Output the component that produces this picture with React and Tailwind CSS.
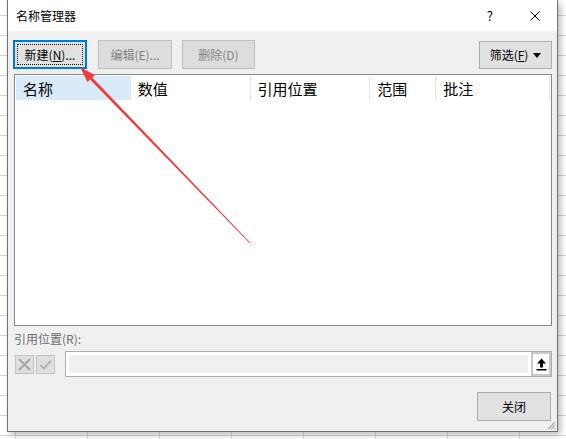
import React from "react";

const COLS = [
  { label: "名称", w: "w-[114px]", selected: true },
  { label: "数值", w: "w-[120px]" },
  { label: "引用位置", w: "w-[120px]" },
  { label: "范围", w: "w-[66px]" },
  { label: "批注", w: "w-[114px]" },
];

export default function App() {
  return (
    <div className="relative w-[566px] h-[439px] overflow-hidden bg-white bg-[linear-gradient(to_right,#d6d6d6_1px,transparent_1px),linear-gradient(to_bottom,#d6d6d6_1px,transparent_1px)] bg-[size:72px_20px] bg-[position:15px_15px] font-['Noto_Sans_CJK_SC',sans-serif] text-black">
      {/* Dialog */}
      <div className="absolute left-[7px] top-0 w-[551px] h-[432px] flex flex-col border-x border-b border-[#707070] bg-[#f0f0f0] shadow-[3px_3px_6px_rgba(0,0,0,0.25)]">
        {/* Title bar */}
        <div className="h-[31px] shrink-0 bg-white flex items-center pl-[8px] pr-[17px]">
          <span className="flex-1 text-[12px] leading-none">名称管理器</span>
          <span className="text-[13px] leading-none">?</span>
          <svg width="10" height="10" viewBox="0 0 10 10" className="ml-[37px]">
            <path d="M0.5 0.5L9.5 9.5M9.5 0.5L0.5 9.5" stroke="#000" strokeWidth="1" />
          </svg>
        </div>

        {/* Body */}
        <div className="flex-1 flex flex-col pl-[6px] pr-[5px]">
          {/* Button row */}
          <div className="mt-[9px] flex items-start">
            <button className="-ml-[1px] w-[74px] h-[29px] border-2 border-[#0078d7] bg-[#e1e1e1] p-[2px]">
              <div className="h-full border border-dotted border-black flex items-center justify-center text-[12px] leading-none">
                新建(<span className="underline">N</span>)...
              </div>
            </button>
            <button className="ml-[11px] w-[74px] h-[29px] border border-[#bfbfbf] bg-[#dddddd] text-[12px] leading-none text-[#838383] flex items-center justify-center">
              编辑(E)...
            </button>
            <button className="ml-[10px] w-[73px] h-[29px] border border-[#bfbfbf] bg-[#dddddd] text-[12px] leading-none text-[#838383] flex items-center justify-center">
              删除(D)
            </button>
            <button className="ml-auto mt-[1px] w-[73px] h-[28px] border border-[#adadad] bg-[#e1e1e1] text-[12px] leading-none flex items-center justify-center gap-[5px]">
              <span>筛选(<span className="underline">F</span>)</span>
              <svg width="8" height="5" viewBox="0 0 8 5">
                <path d="M0 0H8L4 5Z" fill="#000" />
              </svg>
            </button>
          </div>

          {/* List */}
          <div className="mt-[5px] h-[252px] border border-[#828790] bg-white p-[1px]">
            <div className="flex h-[24px]">
              {COLS.map((c, i) => (
                <div
                  key={c.label}
                  className={`${c.w} h-full flex items-center pl-[7px] text-[15px] leading-none ${
                    c.selected ? "bg-[#d9ebf9]" : "border-l border-[#e5e5e5]"
                  }`}
                >
                  {c.label}
                </div>
              ))}
              <div className="flex-1 border-l border-[#e5e5e5]" />
            </div>
          </div>

          {/* Refers to */}
          <div className="mt-[5px] h-[16px] flex items-center text-[12px] leading-none text-[#6d6d6d]">
            引用位置(R):
          </div>
          <div className="mt-[4px] h-[26px] flex items-center">
            <div className="ml-[1px] w-[19px] h-[19px] border border-[#c2c2c2] bg-[#dfdfdf] flex items-center justify-center">
              <svg width="13" height="13" viewBox="0 0 13 13">
                <path d="M1 1L12 12M12 1L1 12" stroke="#a6a6a6" strokeWidth="2" />
              </svg>
            </div>
            <div className="ml-[2px] w-[19px] h-[19px] border border-[#c2c2c2] bg-[#dfdfdf] flex items-center justify-center">
              <svg width="13" height="13" viewBox="0 0 13 13">
                <path d="M1.5 7L5 10.5L12 2.5" stroke="#b3b3b3" strokeWidth="2" fill="none" />
              </svg>
            </div>
            <div className="ml-[10px] flex-1 h-full flex border border-[#adadad] bg-white">
              <div className="flex-1 p-[3px]">
                <div className="h-full bg-[#f0f0f0]" />
              </div>
              <div className="w-[20px] bg-[#c9c9c9] p-[2px] flex">
                <div className="flex-1 bg-white flex items-center justify-center">
                  <svg width="11" height="13" viewBox="0 0 11 13">
                    <path d="M5.5 0.5L10 5.5H7V9.5H4V5.5H1Z" fill="#000" />
                    <rect x="0.5" y="11" width="10" height="1.5" fill="#000" />
                  </svg>
                </div>
              </div>
            </div>
          </div>

          {/* Close */}
          <div className="mt-[15px] flex justify-end pr-[1px]">
            <button className="w-[74px] h-[29px] border border-[#adadad] bg-[#e1e1e1] text-[12px] leading-none flex items-center justify-center">
              关闭
            </button>
          </div>
        </div>

        {/* Resize grip */}
        <svg width="10" height="10" viewBox="0 0 10 10" className="absolute right-[1px] bottom-[1px]">
          <path d="M9 2L2 9M9 5L5 9M9 8L8 9" stroke="#b0b0b0" strokeWidth="1.2" />
        </svg>
      </div>

      {/* Red annotation arrow */}
      <svg width="566" height="439" className="absolute left-0 top-0 pointer-events-none">
        <polygon
          points="80,67 94.7,75 92.2,77.5 250.3,242.7 249.7,243.3 90,79.5 87.5,82"
          fill="#f23a3a"
        />
      </svg>
    </div>
  );
}
